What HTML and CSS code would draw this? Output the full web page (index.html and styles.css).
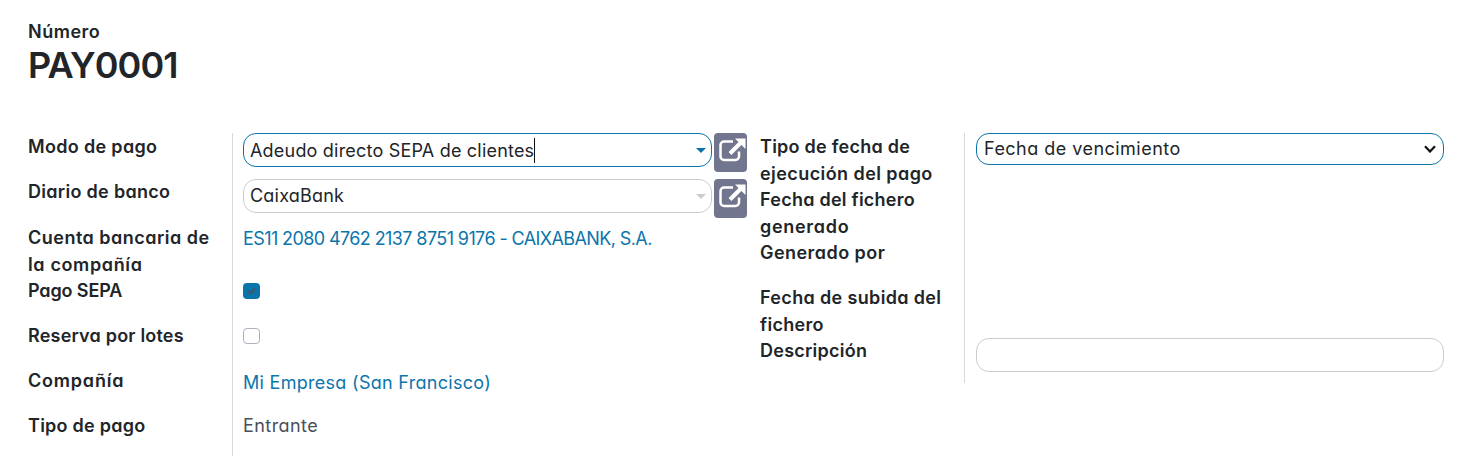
FILE: index.html
```html
<!DOCTYPE html>
<html lang="es">
<head>
<meta charset="utf-8">
<title>PAY0001</title>
<link rel="stylesheet" href="styles.css">
</head>
<body>
<main class="form">
  <header class="title">
    <div class="caption"><span class="t-numero">Número</span></div>
    <h1 class="name"><span class="t-name">PAY0001</span></h1>
  </header>
  <div class="groups">
    <section class="group group-left">
      <div class="label low"><span class="t-modo">Modo de pago</span></div>
      <div class="value many2one">
        <div class="input active"><span class="t-adeudo">Adeudo directo SEPA de clientes</span><i class="cursor"></i><i class="caret"></i></div>
        <div class="open"><svg viewBox="0 0 33 39"><path d="M19 8.500H10a3.500 3.500 0 0 0-3.500 3.500v11.500a3.500 3.500 0 0 0 3.500 3.500H21.500a3.500 3.500 0 0 0 3.500-3.500V18.500" fill="none" stroke="#fff" stroke-width="2.500"/><path d="M16 20.500 28 8.500" stroke="#fff" stroke-width="4"/><path d="M21 5.500h10.500V16z" fill="#fff"/></svg></div>
      </div>
      <div class="label low"><span class="t-diario">Diario de banco</span></div>
      <div class="value many2one second">
        <div class="input"><span class="t-caixa">CaixaBank</span><i class="caret"></i></div>
        <div class="open"><svg viewBox="0 0 33 39"><path d="M19 8.500H10a3.500 3.500 0 0 0-3.500 3.500v11.500a3.500 3.500 0 0 0 3.500 3.500H21.500a3.500 3.500 0 0 0 3.500-3.500V18.500" fill="none" stroke="#fff" stroke-width="2.500"/><path d="M16 20.500 28 8.500" stroke="#fff" stroke-width="4"/><path d="M21 5.500h10.500V16z" fill="#fff"/></svg></div>
      </div>
      <div class="label low"><span class="t-cuenta">Cuenta bancaria de</span><br><span class="t-la">la compañía</span></div>
      <div class="value link"><span class="t-iban">ES11 2080 4762 2137 8751 9176 - CAIXABANK, S.A.</span></div>
      <div class="label"><span class="t-sepa">Pago SEPA</span></div>
      <div class="value check"><div class="box checked"><svg viewBox="0 0 17 16"><path d="M5.500 8.200 7.800 10.300 12 5.800" fill="none" stroke="#435966" stroke-width="2.200"/></svg></div></div>
      <div class="label"><span class="t-reserva">Reserva por lotes</span></div>
      <div class="value check"><div class="box"></div></div>
      <div class="label"><span class="t-comp">Compañía</span></div>
      <div class="value link"><span class="t-mi">Mi Empresa (San Francisco)</span></div>
      <div class="label"><span class="t-tipo">Tipo de pago</span></div>
      <div class="value plain"><span class="t-entrante">Entrante</span></div>
    </section>
    <section class="group group-right">
      <div class="label low"><span class="t-tfecha">Tipo de fecha de</span><br><span class="t-ejec">ejecución del pago</span></div>
      <div class="value"><div class="select"><span class="t-venc">Fecha de vencimiento</span><svg class="chevron" viewBox="0 0 12 8"><path d="M1 1.200 6 6.500 11 1.200" fill="none" stroke="#111" stroke-width="2.200"/></svg></div></div>
      <div class="label low"><span class="t-ffich">Fecha del fichero</span><br><span class="t-gen">generado</span></div>
      <div class="value"></div>
      <div class="label"><span class="t-genpor">Generado por</span></div>
      <div class="value"></div>
      <div class="label"><span class="t-subida">Fecha de subida del</span><br><span class="t-fich">fichero</span></div>
      <div class="value"></div>
      <div class="label"><span class="t-desc">Descripción</span></div>
      <div class="value"><div class="input"></div></div>
    </section>
  </div>
</main>
</body>
</html>
```
FILE: styles.css
```css
* { box-sizing: border-box; }
body {
  margin: 0;
  width: 1471px;
  height: 456px;
  overflow: hidden;
  background: #fff;
  color: #212529;
  font: 400 18px/26.600px Inter, sans-serif;
  font-feature-settings: "cv11";
}
.form { padding: 18px 27px 0 28px; }
.title { height: 115px; white-space: nowrap; }
.caption { font-weight: 600; line-height: 27px; }
.name { margin: 0; font-size: 36px; font-weight: 600; line-height: 41px; }
.groups { display: flex; gap: 13px; align-items: flex-start; }
.group { display: grid; white-space: nowrap; }
.group-left { grid-template-columns: 205px 514px; grid-template-rows: 45px 46px 54px 45px 45px 45px 45px; }
.group-right { grid-template-columns: 205px 479px; grid-template-rows: 53px 54px 45px 53px 45px; }
.label { border-right: 1px solid #d9d9d9; font-weight: 600; line-height: 26.600px; }
.low { padding-top: 0.700px; line-height: 26.900px; }
.value { padding-left: 10px; }
.group-right .value { padding-left: 11px; }
.many2one { display: flex; gap: 2px; }
.second { padding-top: 1px; }
.input, .select {
  display: flex;
  align-items: center;
  flex: 1;
  height: 34px;
  padding: 0 5px 0 6px;
  border: 1px solid #ccc;
  border-radius: 13px;
}
.input { line-height: 32px; }
.active, .select { border-color: #0b75ab; }
.active span { padding-top: 2px; }
.select { height: 32px; padding: 0 7px; }
.cursor { width: 1px; height: 25px; background: #111; }
.caret { margin-left: auto; border: 5px solid transparent; border-top-color: #ccc; border-bottom: 0; }
.active .caret { border-top-color: #0b75ab; }
.chevron { width: 12px; height: 8px; margin-left: auto; }
.open { width: 33px; height: 39px; border-radius: 4px; background: #71758d; }
.open svg { display: block; width: 33px; height: 39px; }
.link { padding-top: 2px; color: #0b75ab; }
.plain { color: #495057; }
.check { padding-top: 5px; }
.box { width: 17px; height: 16px; border: 1px solid #adb0bd; border-radius: 4px; }
.checked { border: 0; background: #0b75ab; }
.checked svg { display: block; }

/* Per-text tracking */
.t-numero { letter-spacing: 0.500px; }
.t-name { letter-spacing: -0.900px; }
.t-modo { letter-spacing: 0.330px; }
.t-adeudo { letter-spacing: 0.200px; }
.t-diario { letter-spacing: 0.300px; }
.t-caixa { letter-spacing: 0.200px; }
.t-cuenta { letter-spacing: 0.490px; }
.t-la { letter-spacing: 0.640px; }
.t-iban { letter-spacing: -0.600px; }
.t-sepa { letter-spacing: -0.120px; }
.t-reserva { letter-spacing: 0.200px; }
.t-comp { letter-spacing: 0.800px; }
.t-mi { letter-spacing: 0.290px; }
.t-tipo { letter-spacing: 0.250px; }
.t-entrante { letter-spacing: 0.430px; }
.t-tfecha { letter-spacing: 0.250px; }
.t-ejec { letter-spacing: 0.430px; }
.t-venc { letter-spacing: 0.470px; }
.t-ffich { letter-spacing: 0.250px; }
.t-gen { letter-spacing: 0.700px; }
.t-genpor { letter-spacing: 0.450px; }
.t-subida { letter-spacing: 0.350px; }
.t-fich { letter-spacing: 0.300px; }
.t-desc { letter-spacing: 0.250px; }
```
